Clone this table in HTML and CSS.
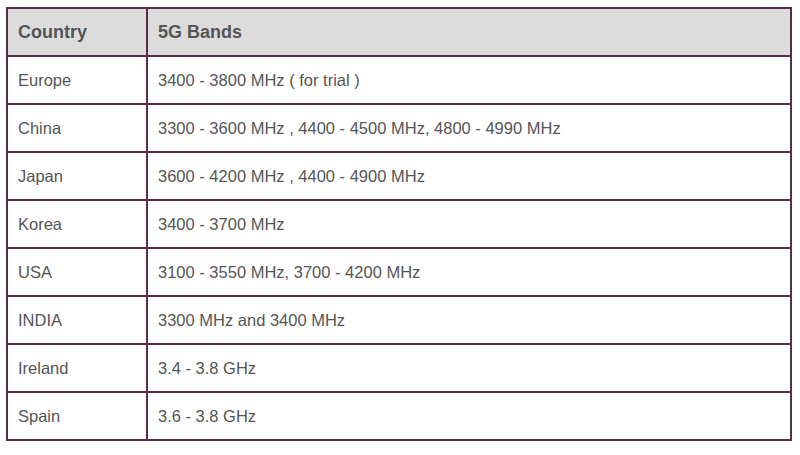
FILE: index.html
```html
<!DOCTYPE html>
<html>
<head>
<meta charset="utf-8">
<link rel="stylesheet" href="styles.css">
</head>
<body>
<table class="bands">
  <thead>
    <tr><th class="c1">Country</th><th>5G Bands</th></tr>
  </thead>
  <tbody>
    <tr><td>Europe</td><td>3400 - 3800 MHz ( for trial )</td></tr>
    <tr><td>China</td><td>3300 - 3600 MHz , 4400 - 4500 MHz, 4800 - 4990 MHz</td></tr>
    <tr><td>Japan</td><td>3600 - 4200 MHz , 4400 - 4900 MHz</td></tr>
    <tr><td>Korea</td><td>3400 - 3700 MHz</td></tr>
    <tr><td>USA</td><td>3100 - 3550 MHz, 3700 - 4200 MHz</td></tr>
    <tr><td>INDIA</td><td>3300 MHz and 3400 MHz</td></tr>
    <tr><td>Ireland</td><td>3.4 - 3.8 GHz</td></tr>
    <tr><td>Spain</td><td>3.6 - 3.8 GHz</td></tr>
  </tbody>
</table>
</body>
</html>
```

FILE: styles.css
```css
html, body {
  margin: 0;
  padding: 0;
  background: #ffffff;
}
body {
  padding: 7px 0 0 6px;
  font-family: "Liberation Sans", Arial, sans-serif;
}
.bands {
  border-collapse: collapse;
  width: 786px;
  table-layout: fixed;
}
.bands th, .bands td {
  border: 2px solid #5c2b48;
  height: 48px;
  padding: 0 10px;
  text-align: left;
  vertical-align: middle;
  color: #555555;
  box-sizing: border-box;
}
.bands .c1 {
  width: 140px;
}
.bands th {
  background: #dcdcdc;
  font-size: 18px;
  font-weight: bold;
}
.bands td {
  font-size: 16.5px;
}
```
